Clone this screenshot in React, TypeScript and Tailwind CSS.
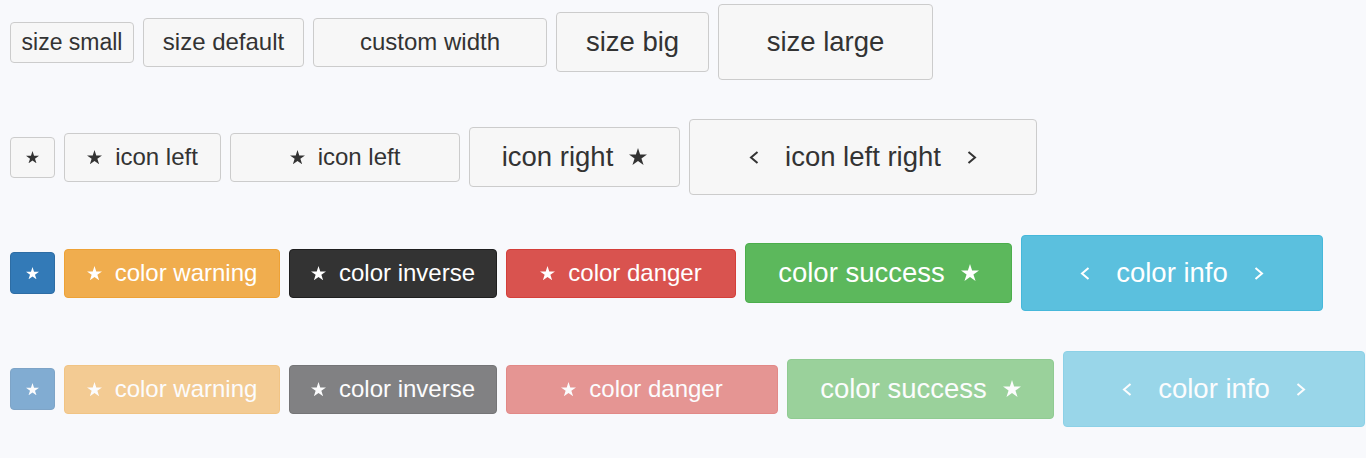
import type { ReactNode } from "react";

type Size = "sm" | "md" | "lg" | "xl";
type Variant =
  | "default"
  | "primary"
  | "warning"
  | "inverse"
  | "danger"
  | "success"
  | "info";

const SIZE: Record<Size, string> = {
  sm: "h-[41px] text-[23px]",
  md: "h-[49px] text-[24px]",
  lg: "h-[60px] text-[27.5px]",
  xl: "h-[76px] text-[27.5px]",
};

const GAP: Record<Size, string> = {
  sm: "gap-[12px]",
  md: "gap-[13px]",
  lg: "gap-[16px]",
  xl: "gap-[26px]",
};

const VARIANT: Record<Variant, string> = {
  default: "bg-[#f7f7f7] border-[#cccccc] text-[#333333]",
  primary: "bg-[#337ab7] border-[#2e6da4] text-white",
  warning: "bg-[#f0ad4e] border-[#eea236] text-white",
  inverse: "bg-[#333333] border-[#1f1f1f] text-white",
  danger: "bg-[#d9534f] border-[#d43f3a] text-white",
  success: "bg-[#5cb85c] border-[#4cae4c] text-white",
  info: "bg-[#5bc0de] border-[#46b8da] text-white",
};

function Star({ size }: { size: number }) {
  return (
    <svg
      width={size}
      height={size * 0.951}
      viewBox="2.45 0 95.1 90.45"
      className="shrink-0"
      fill="currentColor"
    >
      <polygon points="50,0 61.23,34.55 97.55,34.55 68.17,55.9 79.39,90.45 50,69.1 20.61,90.45 31.83,55.9 2.45,34.55 38.77,34.55" />
    </svg>
  );
}

function Chevron({ dir }: { dir: "left" | "right" }) {
  return (
    <svg width="10" height="13" viewBox="0 0 10 13" className="shrink-0">
      <polyline
        points={dir === "left" ? "8.5,1 2,6.5 8.5,12" : "1.5,1 8,6.5 1.5,12"}
        fill="none"
        stroke="currentColor"
        strokeWidth="2"
      />
    </svg>
  );
}

function Btn({
  size = "md",
  variant = "default",
  width,
  faded,
  children,
}: {
  size?: Size;
  variant?: Variant;
  width: string;
  faded?: boolean;
  children: ReactNode;
}) {
  return (
    <button
      className={`flex shrink-0 items-center justify-center rounded-[4px] border leading-none ${SIZE[size]} ${GAP[size]} ${VARIANT[variant]} ${width} ${faded ? "opacity-60" : ""}`}
    >
      {children}
    </button>
  );
}

function ColorRow({ faded }: { faded?: boolean }) {
  return (
    <div className="flex h-[76px] items-center gap-[9px]">
      <Btn size="sm" variant="primary" width="w-[45px] !h-[42px]" faded={faded}>
        <Star size={13} />
      </Btn>
      <Btn variant="warning" width="w-[216px]" faded={faded}>
        <Star size={15} />
        <span>color warning</span>
      </Btn>
      <Btn variant="inverse" width="w-[208px]" faded={faded}>
        <Star size={15} />
        <span>color inverse</span>
      </Btn>
      {faded ? (
        <Btn variant="danger" width="w-[272px]" faded>
          <Star size={15} />
          <span>color danger</span>
        </Btn>
      ) : (
        <Btn variant="danger" width="w-[230px]">
          <Star size={15} />
          <span>color danger</span>
        </Btn>
      )}
      <Btn size="lg" variant="success" width="w-[267px]" faded={faded}>
        <span>color success</span>
        <Star size={18} />
      </Btn>
      <Btn size="xl" variant="info" width="w-[302px]" faded={faded}>
        <Chevron dir="left" />
        <span>color info</span>
        <Chevron dir="right" />
      </Btn>
    </div>
  );
}

export default function App() {
  return (
    <div className="min-h-screen overflow-hidden bg-[#f8f9fc] pl-[10px] pt-[4px] font-['Liberation_Sans',Arial,sans-serif]">
      {/* sizes */}
      <div className="flex h-[76px] items-center gap-[9px]">
        <Btn size="sm" width="w-[124px]">size small</Btn>
        <Btn width="w-[161px]">size default</Btn>
        <Btn width="w-[234px]">custom width</Btn>
        <Btn size="lg" width="w-[153px]">size big</Btn>
        <Btn size="xl" width="w-[215px]">size large</Btn>
      </div>

      {/* icons */}
      <div className="mt-[39px] flex h-[76px] items-center gap-[9px]">
        <Btn size="sm" width="w-[45px]">
          <Star size={13} />
        </Btn>
        <Btn width="w-[157px]">
          <Star size={15} />
          <span>icon left</span>
        </Btn>
        <Btn width="w-[230px]">
          <Star size={15} />
          <span>icon left</span>
        </Btn>
        <Btn size="lg" width="w-[211px]">
          <span>icon right</span>
          <Star size={18} />
        </Btn>
        <Btn size="xl" width="w-[348px]">
          <Chevron dir="left" />
          <span>icon left right</span>
          <Chevron dir="right" />
        </Btn>
      </div>

      {/* colours */}
      <div className="mt-10">
        <ColorRow />
      </div>

      {/* colours, disabled */}
      <div className="mt-10">
        <ColorRow faded />
      </div>
    </div>
  );
}
